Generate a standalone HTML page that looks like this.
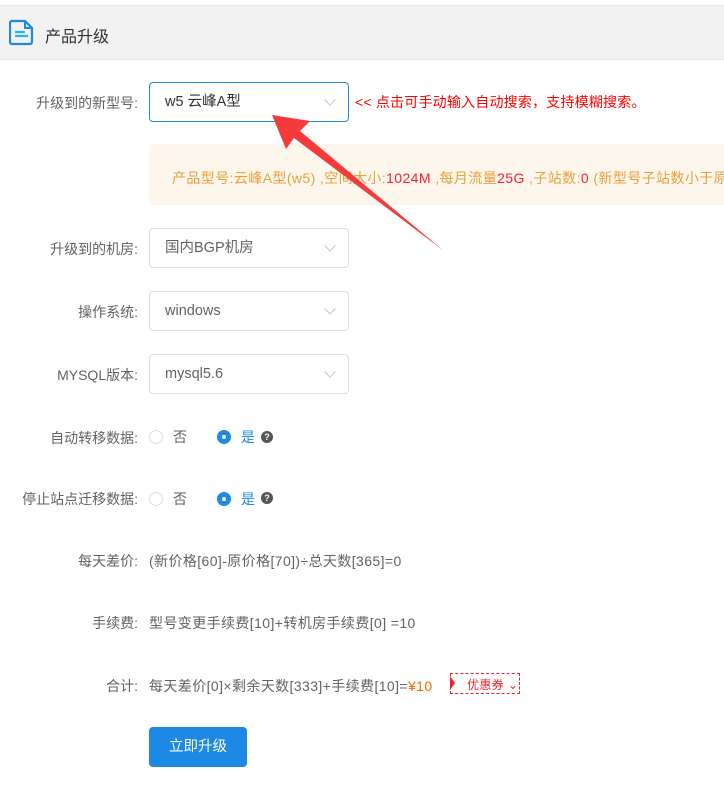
<!DOCTYPE html>
<html><head><meta charset="utf-8"><style>
*{margin:0;padding:0;box-sizing:border-box}
body{width:724px;height:787px;background:#fff;font-family:"Liberation Sans","Noto Sans CJK SC",sans-serif;font-size:14px;color:#606266;position:relative;overflow:hidden}
.hdr{position:absolute;left:0;top:5px;width:724px;height:55px;background:#f2f2f2;border-top:1px solid #e8e8e8;border-bottom:1px solid #e6e6e6}
.hdr span{position:absolute;left:45px;top:17px;font-size:16px;color:#303133}
.lbl{position:absolute;right:586px;text-align:right;white-space:nowrap}
.sel{position:absolute;left:149px;width:200px;height:40px;border:1px solid #dcdfe6;border-radius:4px;padding-left:15px;line-height:38px;color:#606266;font-size:14.5px}
.sel:after{content:"";position:absolute;right:14px;top:13px;width:7px;height:7px;border-right:1px solid #c0c4cc;border-bottom:1px solid #c0c4cc;transform:rotate(45deg)}
.t{position:absolute;white-space:nowrap;letter-spacing:0.4px}
.r{position:absolute;width:14px;height:14px;border-radius:50%;border:1px solid #dcdfe6}
.r.on{border:none;background:#1e88e5}
.r.on:after{content:"";position:absolute;left:5px;top:5px;width:4px;height:4px;border-radius:50%;background:#fff}
.q{position:absolute;width:12px;height:12px;border-radius:50%;background:#555;color:#fff;font-size:9px;font-weight:bold;text-align:center;line-height:12px}
</style></head><body>
<div class="hdr"><span>产品升级</span></div>
<svg style="position:absolute;left:9px;top:19px" width="26" height="27" viewBox="0 0 26 27"><path d="M3 2h13l7 7v14a2 2 0 0 1-2 2H3a2 2 0 0 1-2-2V4a2 2 0 0 1 2-2z" fill="none" stroke="#1e88e5" stroke-width="2.2"/><path d="M16 2v7h7" fill="none" stroke="#1e88e5" stroke-width="2"/><path d="M6 13h10M6 17h13" stroke="#29b6f6" stroke-width="2.2"/></svg>

<div class="lbl" style="top:93px">升级到的新型号:</div>
<div class="sel" style="top:82px;border-color:#1e88e5;color:#303133">w5 云峰A型</div>
<div class="t" style="left:355px;top:92px;color:#f00;font-size:14px;letter-spacing:0.2px">&lt;&lt; 点击可手动输入自动搜索，支持模糊搜索。</div>

<div style="position:absolute;left:149px;top:144px;width:580px;height:61px;background:#fdf6ec;border-radius:4px"></div>
<div class="t" style="left:172px;top:168px;color:#e6a23c;font-size:14px">产品型号:云峰A型(w5) ,空间大小:<span style="color:#f5222d">1024M</span> ,每月流量<span style="color:#f5222d">25G</span> ,子站数:<span style="color:#f5222d">0</span> (新型号子站数小于原型号</div>

<div class="lbl" style="top:239px">升级到的机房:</div>
<div class="sel" style="top:228px">国内BGP机房</div>
<div class="lbl" style="top:302px">操作系统:</div>
<div class="sel" style="top:291px">windows</div>
<div class="lbl" style="top:365px">MYSQL版本:</div>
<div class="sel" style="top:354px">mysql5.6</div>

<div class="lbl" style="top:428px">自动转移数据:</div>
<div class="r" style="left:149px;top:430px"></div><div class="t" style="left:173px;top:427px">否</div>
<div class="r on" style="left:217px;top:430px"></div><div class="t" style="left:241px;top:427px;color:#1e88e5">是</div><div class="q" style="left:261px;top:431px">?</div>

<div class="lbl" style="top:489px">停止站点迁移数据:</div>
<div class="r" style="left:149px;top:492px"></div><div class="t" style="left:173px;top:489px">否</div>
<div class="r on" style="left:217px;top:492px"></div><div class="t" style="left:241px;top:489px;color:#1e88e5">是</div><div class="q" style="left:261px;top:492px">?</div>

<div class="lbl" style="top:551px">每天差价:</div>
<div class="t" style="left:149px;top:551px">(新价格[60]-原价格[70])÷总天数[365]=0</div>
<div class="lbl" style="top:613px">手续费:</div>
<div class="t" style="left:149px;top:613px">型号变更手续费[10]+转机房手续费[0] =10</div>
<div class="lbl" style="top:676px">合计:</div>
<div class="t" style="left:149px;top:676px">每天差价[0]×剩余天数[333]+手续费[10]=<span style="color:#ff6600">¥10</span></div>
<div style="position:absolute;left:450px;top:673px;width:70px;height:21px;border:1px dashed #f5222d"></div>
<div style="position:absolute;left:450px;top:676px;width:0;height:0;border-top:7px solid transparent;border-bottom:7px solid transparent;border-left:5px solid #f5222d"></div>
<div class="t" style="left:467px;top:676px;color:#f5222d;font-size:12px">优惠券 ⌄</div>

<div style="position:absolute;left:149px;top:727px;width:98px;height:40px;background:#1e88e5;border-radius:4px;color:#fff;text-align:center;line-height:40px;font-size:14.5px">立即升级</div>

<svg style="position:absolute;left:0;top:0" width="724" height="787"><polygon points="272,115 310,121 300,131 444,251 294,138 286,149" fill="#f43a3a"/></svg>
</body></html>
